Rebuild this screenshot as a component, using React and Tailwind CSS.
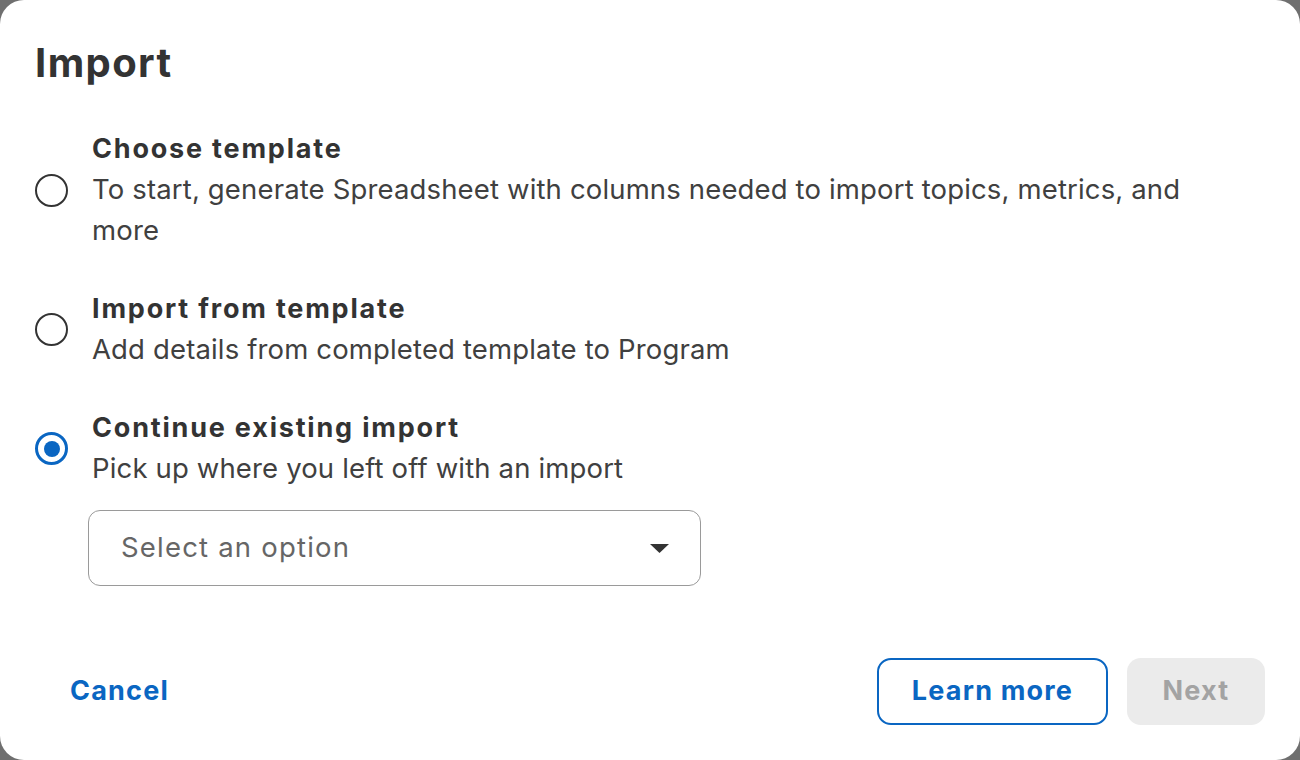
import { useState } from "react";

const options = [
  {
    id: "choose",
    title: "Choose template",
    desc: "To start, generate Spreadsheet with columns needed to import topics, metrics, and more",
  },
  {
    id: "import",
    title: "Import from template",
    desc: "Add details from completed template to Program",
  },
  {
    id: "continue",
    title: "Continue existing import",
    desc: "Pick up where you left off with an import",
  },
];

const Radio = ({ checked }) => (
  <span
    className={
      checked
        ? "flex h-[33px] w-[33px] shrink-0 items-center justify-center rounded-full border-[3px] border-[#0a66c2]"
        : "flex h-[33px] w-[33px] shrink-0 items-center justify-center rounded-full border-[2.5px] border-[#333333]"
    }
  >
    {checked && <span className="h-[16px] w-[16px] rounded-full bg-[#0a66c2]" />}
  </span>
);

const App = () => {
  const [selected, setSelected] = useState("continue");

  return (
    <div
      className="h-[760px] w-[1300px] bg-[#6f6f6f]"
      style={{ fontFamily: "Inter, 'Liberation Sans', sans-serif" }}
    >
      <div className="flex h-full w-full flex-col rounded-[24px] bg-white">
        <h1 className="pl-[35px] pt-[38px] text-[40px] font-bold leading-[50px] tracking-[1.4px] text-[#333333]">
          Import
        </h1>

        <div className="mt-[41px] flex flex-col gap-[38px] pl-[35px] pr-[100px]">
          {options.map((opt) => (
            <label
              key={opt.id}
              className="flex cursor-pointer items-center gap-[24px]"
              onClick={() => setSelected(opt.id)}
            >
              <Radio checked={selected === opt.id} />
              <div className="flex flex-col">
                <span className="text-[27px] font-bold leading-[40px] tracking-[1.8px] text-[#333333]">
                  {opt.title}
                </span>
                <span className="text-[27.5px] leading-[41px] tracking-[0.15px] text-[#404040]">
                  {opt.desc}
                </span>
              </div>
            </label>
          ))}
        </div>

        <div className="ml-[88px] mt-[21px] flex h-[76px] w-[613px] items-center justify-between rounded-[12px] border-[1.5px] border-[#9a9a9a] pl-[32px] pr-[31px]">
          <span className="text-[27.5px] tracking-[1.2px] text-[#666666]">Select an option</span>
          <svg width="19" height="9" viewBox="0 0 19 9">
            <path d="M0 0h19L9.5 9z" fill="#333333" />
          </svg>
        </div>

        <div className="mt-auto mb-[35px] flex items-center justify-between pl-[35px] pr-[35px]">
          <button className="px-[35px] text-[27px] font-bold tracking-[1.2px] text-[#0a66c2]">Cancel</button>
          <div className="flex items-center gap-[19px]">
            <button className="h-[67px] w-[231px] rounded-[14px] border-2 border-[#0a66c2] text-[27px] font-bold tracking-[1.2px] text-[#0a66c2]">
              Learn more
            </button>
            <button className="h-[67px] w-[138px] rounded-[14px] bg-[#ebebeb] text-[27px] font-bold tracking-[1.2px] text-[#a3a3a3]">
              Next
            </button>
          </div>
        </div>
      </div>
    </div>
  );
};

export default App;
